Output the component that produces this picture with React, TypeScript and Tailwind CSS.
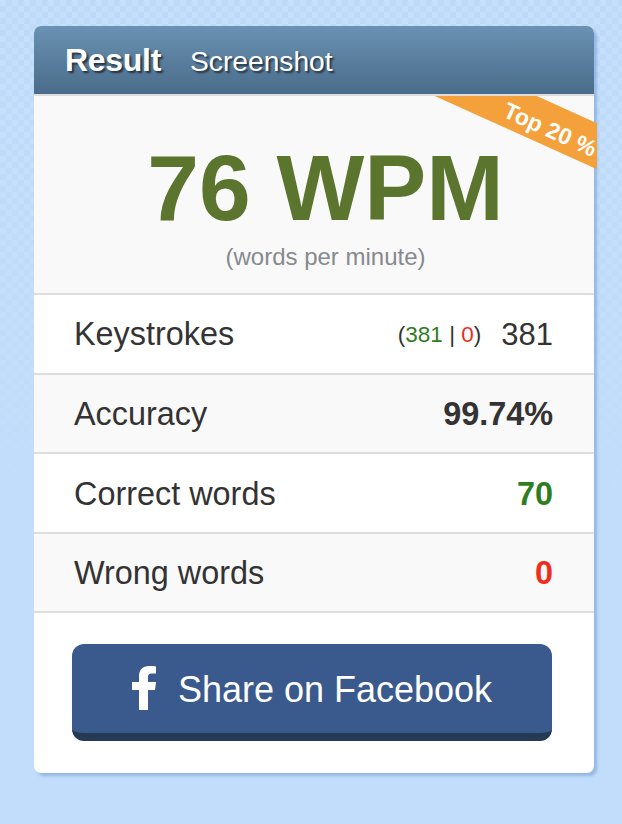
import React from 'react';

const Row: React.FC<{ label: string; shaded?: boolean; children: React.ReactNode }> = ({ label, shaded, children }) => (
  <div className={`flex h-[79.6px] items-center justify-between border-b-2 border-[#dddddd] pl-[40px] pr-[41px] pt-[2px] ${shaded ? 'bg-[#f9f9f9]' : 'bg-white'}`}>
    <span className="text-[32.4px] text-[#333333]">{label}</span>
    {children}
  </div>
);

const App: React.FC = () => {
  return (
    <div className="h-[824px] w-[622px] overflow-hidden bg-[linear-gradient(to_bottom,transparent,#c2ddfb_520px),repeating-conic-gradient(#bedafa_0_25%,#c5dffb_0_50%)] bg-[size:100%_100%,12px_12px] bg-[#c2ddfb] pt-[26px] pl-[34px] font-['Liberation_Sans',Arial,sans-serif]">
      <div className="h-[747px] w-[560px] rounded-[7px] bg-white shadow-[3px_3px_3px_rgba(90,140,200,0.45)]">
        <div className="flex h-[70px] items-baseline gap-[29px] rounded-t-[7px] border-b-2 border-[#dddddd] bg-gradient-to-b from-[#6a92b3] to-[#4a6c8a] pl-[31px] pt-[10px] text-white [text-shadow:2px_2px_2px_rgba(0,0,0,0.6)]">
          <span className="text-[32px] font-bold tracking-[-0.3px]">Result</span>
          <span className="text-[28.2px]">Screenshot</span>
        </div>

        <div className="relative h-[199px] border-b-2 border-[#dddddd] bg-[#f9f9f9] pl-[23px] text-center">
          <div className="pt-[42px] text-[93px] font-bold leading-[100px] text-[#5b752f]">76 WPM</div>
          <div className="mt-[4px] text-[24px] leading-[30px] text-[#868a8f]">(words per minute)</div>
          <div className="absolute inset-y-0 -right-[3px] left-0 overflow-hidden">
            <div className="absolute left-[376px] top-[8px] flex h-[42px] w-[280px] rotate-[24.3deg] items-center justify-center bg-[#f4a13b] pl-[4px] pt-[8px] text-[23px] font-bold text-white">
              Top 20 %
            </div>
          </div>
        </div>

        <Row label="Keystrokes">
          <div className="flex items-center gap-[20px]">
            <span className="text-[22.5px] text-[#333333]">
              (<span className="text-[#2f7d1f]">381</span> | <span className="text-[#ee2e1e]">0</span>)
            </span>
            <span className="text-[31px] text-[#333333]">381</span>
          </div>
        </Row>
        <Row label="Accuracy" shaded>
          <span className="text-[32.4px] font-bold text-[#333333]">99.74%</span>
        </Row>
        <Row label="Correct words">
          <span className="text-[32.4px] font-bold text-[#2f7d1f]">70</span>
        </Row>
        <Row label="Wrong words" shaded>
          <span className="text-[32.4px] font-bold text-[#ee2e1e]">0</span>
        </Row>

        <div className="px-[38px] pt-[31px]">
          <div className="flex h-[97px] w-[480px] items-center justify-center gap-[22px] rounded-[12px] border-b-[8px] border-[#243a55] bg-[#3a5a8e] text-[36px] text-white">
            <svg className="mb-[2px]" width="24" height="44" viewBox="0 0 24 44" aria-hidden="true">
              <path fill="#ffffff" d="M7 44V24H0v-8h7V10.500C7 3.500 11 0 17 0c3 0 5.500.2 7 .4v7h-4c-3.200 0-4 1.500-4 3.800V16h8l-1 8h-7v20z" />
            </svg>
            <span className="mt-[2px]">Share on Facebook</span>
          </div>
        </div>
      </div>
    </div>
  );
};

export default App;
